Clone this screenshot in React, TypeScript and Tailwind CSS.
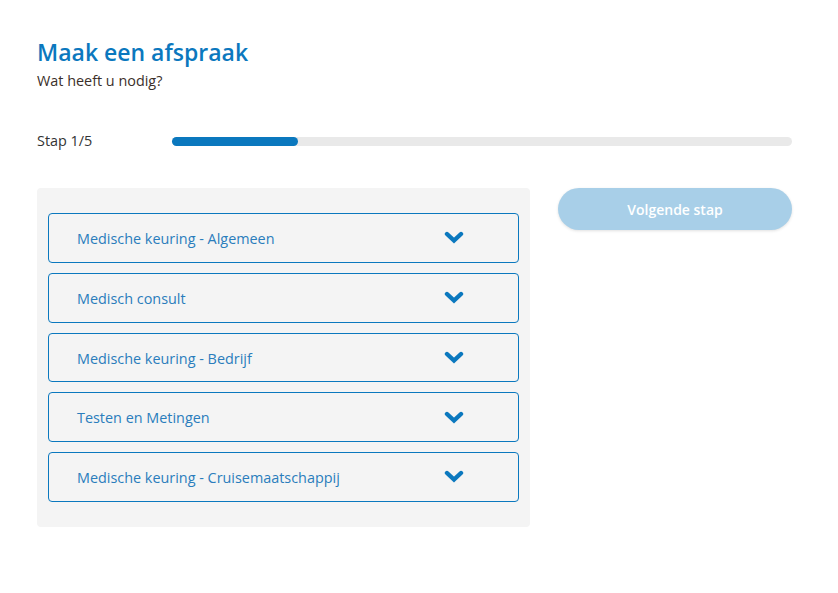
import React from 'react'

const ITEMS = [
  'Medische keuring - Algemeen',
  'Medisch consult',
  'Medische keuring - Bedrijf',
  'Testen en Metingen',
  'Medische keuring - Cruisemaatschappij',
] as const

function Chevron() {
  return (
    <svg viewBox="0 0 20 13" className="h-[13px] w-[20px]" aria-hidden>
      <polyline
        points="3,3 10,9.5 17,3"
        fill="none"
        stroke="#0b78be"
        strokeWidth="4.4"
        strokeLinecap="round"
        strokeLinejoin="miter"
      />
    </svg>
  )
}

export default function App() {
  return (
    <div className="min-h-[593px] bg-white font-['Open_Sans',sans-serif]">
      <div className="ml-[37px] w-[755px] pt-[34px]">
        <h1 className="text-[23px] font-semibold leading-[36px] text-[#0b78be]">Maak een afspraak</h1>
        <p className="mt-[1px] text-[14.4px] leading-[20px] text-[#3b2f2a]">Wat heeft u nodig?</p>

        <div className="mt-[40px] flex items-center">
          <span className="w-[135px] text-[14.4px] leading-[20px] text-[#333]">Stap 1/5</span>
          <div className="h-[9px] flex-1 rounded-full bg-[#e9e9e9]">
            <div className="h-full w-[126px] rounded-full bg-[#0b78be]" />
          </div>
        </div>

        <div className="mt-[37px] flex items-start gap-[28px]">
          <div className="flex w-[493px] flex-col gap-[10px] rounded-[4px] bg-[#f4f4f4] px-[11px] py-[25px]">
            {ITEMS.map((label) => (
              <button
                key={label}
                className="flex h-[49.75px] items-center justify-between rounded-[4px] border border-[#0b78be] pl-[28px] pr-[54px] text-left"
              >
                <span className="pt-[2px] text-[14.4px] text-[#2a7dbc]">{label}</span>
                <Chevron />
              </button>
            ))}
          </div>

          <button className="h-[42px] w-[234px] rounded-full bg-[#a8cfe8] text-[14px] font-semibold text-white shadow-[0_1px_3px_rgba(0,0,0,0.12)]">
            Volgende stap
          </button>
        </div>
      </div>
    </div>
  )
}
